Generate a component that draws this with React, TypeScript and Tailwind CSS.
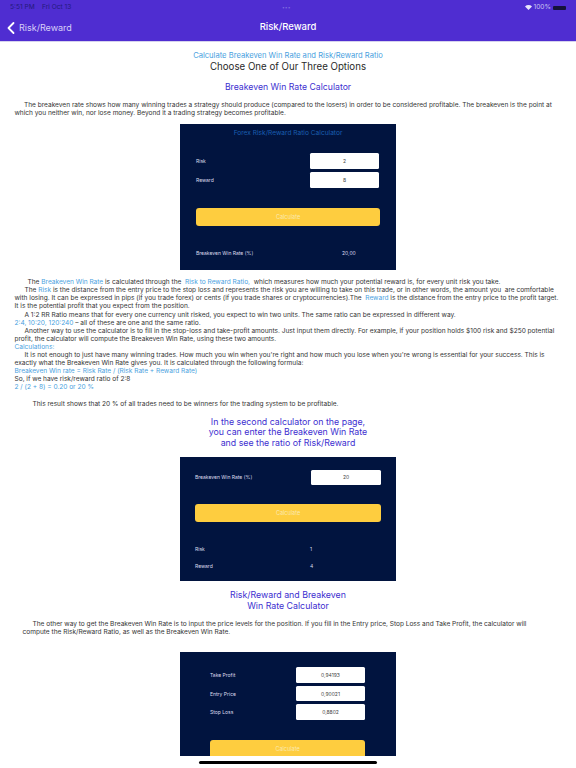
import { ChevronLeft } from 'lucide-react';
import type { ReactNode } from 'react';

function Link({ children }: { children: ReactNode }) {
  return <span className="text-[#4a9fe0]">{children}</span>;
}

function Input({ value, width }: { value: string; width: string }) {
  return (
    <div className={`flex h-[15.5px] items-center justify-center rounded-[1.5px] bg-white text-[5px] text-[#444] ${width}`}>
      {value}
    </div>
  );
}

function Button({ width }: { width: string }) {
  return (
    <div className={`flex h-[18px] shrink-0 items-center justify-center rounded-[3px] bg-[#fecd3f] text-[5.5px] text-[#fbe9b0] ${width}`}>
      Calculate
    </div>
  );
}

export default function App() {
  return (
    <div className="relative h-[768px] w-[576px] overflow-hidden bg-white font-['Inter',sans-serif] text-[#333]">
      <header className="h-[42px] border-b border-[#d5d2ee] bg-[#4f2dd1] text-white">
        <div className="flex h-[14px] items-center justify-between pl-[10px] pr-[10px] pt-[2px] text-[6.6px] text-[#241a7a]">
          <span>5:51 PM&nbsp;&nbsp;&nbsp; Fri Oct 13</span>
          <span className="flex items-center gap-[2px] text-[#c9c2f0]">
            <svg width="7" height="5" viewBox="0 0 14 10" fill="#e8e4fb">
              <path d="M7 10 0 3a10 10 0 0 1 14 0z" />
            </svg>
            100%
            <span className="h-[4.5px] w-[13px] rounded-[1px] bg-[#15123a]" />
          </span>
        </div>
        <div className="relative flex h-[27px] items-center justify-center text-[9.5px] font-medium">
          Risk/Reward
          <div className="absolute left-[1px] top-[3.5px] flex items-center text-[#d8d0f8]">
            <ChevronLeft size={20} strokeWidth={2.2} className="-mr-[2px] text-white" />
            <span className="text-[9px] font-normal">Risk/Reward</span>
          </div>
        </div>
      </header>

      <main className="px-[14.5px] pt-[8.5px] text-[6.56px] leading-[8.1px]">
        <div className="text-center">
          <p className="text-[7.6px] leading-[10px] text-[#4a9fe0]">Calculate Breakeven Win Rate and Risk/Reward Ratio</p>
          <p className="text-[9.7px] leading-[12px] text-[#2a2a2a]">Choose One of Our Three Options</p>
          <h2 className="mt-[8px] text-[8.7px] leading-[12px] text-[#3d2fd0]">Breakeven Win Rate Calculator</h2>
        </div>
        <p className="mt-[8px] whitespace-nowrap indent-[9.5px]">
          The breakeven rate shows how many winning trades a strategy should produce (compared to the losers) in order to be considered profitable. The breakeven is the point at
          <br />
          which you neither win, nor lose money. Beyond it a trading strategy becomes profitable.
        </p>

        <section className="mx-auto mt-[7.5px] h-[146px] w-[216px] bg-[#01143f] px-4 pt-[5px] text-[5px] text-[#dde]">
          <p className="text-center text-[6.6px] text-[#1a5fb0]">Forex Risk/Reward Ratio Calculator</p>
          <div className="mt-[16px] flex flex-col gap-[3.5px]">
            <div className="flex items-center justify-between pr-[1px]">
              <span>Risk</span>
              <Input value="2" width="w-[69px]" />
            </div>
            <div className="flex items-center justify-between pr-[1px]">
              <span>Reward</span>
              <Input value="8" width="w-[69px]" />
            </div>
          </div>
          <div className="mt-[20px]">
            <Button width="w-[184px]" />
          </div>
          <div className="mt-[20px] flex h-[15px] items-center">
            <span className="w-[146px]">Breakeven Win Rate (%)</span>
            <span>20,00</span>
          </div>
        </section>

        <div className="mt-[8px] whitespace-nowrap">
          <p className="indent-[13px]">
            The <Link>Breakeven Win Rate</Link> is calculated through the&nbsp; <Link>Risk to Reward Ratio,</Link>&nbsp; which measures how much your potential reward is, for every unit risk you take.
          </p>
          <p className="indent-[10px]">
            The <Link>Risk</Link> is the distance from the entry price to the stop loss and represents the risk you are willing to take on this trade, or in other words, the amount you&nbsp; are comfortable
            <br />
            with losing. It can be expressed in pips (if you trade forex) or cents (if you trade shares or cryptocurrencies).The&nbsp; <Link>Reward</Link> is the distance from the entry price to the profit target.
            <br />
            It is the potential profit that you expect from the position.
          </p>
          <p className="indent-[10px]">A 1:2 RR Ratio means that for every one currency unit risked, you expect to win two units. The same ratio can be expressed in different way.</p>
          <p>
            <Link>2:4, 10:20, 120:240</Link> – all of these are one and the same ratio.
          </p>
          <p className="indent-[10px]">
            Another way to use the calculator is to fill in the stop-loss and take-profit amounts. Just input them directly. For example, if your position holds $100 risk and $250 potential
            <br />
            profit, the calculator will compute the Breakeven Win Rate, using these two amounts.
          </p>
          <p>
            <Link>Calculations:</Link>
          </p>
          <p className="indent-[10px]">
            It is not enough to just have many winning trades. How much you win when you're right and how much you lose when you're wrong is essential for your success. This is
            <br />
            exactly what the Breakeven Win Rate gives you. It is calculated through the following formula:
          </p>
          <p>
            <Link>Breakeven Win rate = Risk Rate / (Risk Rate + Reward Rate)</Link>
          </p>
          <p>So, if we have risk/reward ratio of 2:8</p>
          <p>
            <Link>2 / (2 + 8) = 0.20 or 20 %</Link>
          </p>
          <p className="mt-[8px] pl-[18px]">This result shows that 20 % of all trades need to be winners for the trading system to be profitable.</p>
        </div>

        <h2 className="mt-[9px] text-center text-[8.8px] leading-[10.7px] text-[#3d2fd0]">
          In the second calculator on the page,
          <br />
          you can enter the Breakeven Win Rate
          <br />
          and see the ratio of Risk/Reward
        </h2>

        <section className="mx-auto mt-[8px] h-[124px] w-[216px] bg-[#01143f] px-[15px] pt-[13px] text-[5px] text-[#dde]">
          <div className="flex items-center justify-between">
            <span>Breakeven Win Rate (%)</span>
            <Input value="20" width="w-[70px]" />
          </div>
          <div className="mt-[19px]">
            <Button width="w-[186px]" />
          </div>
          <div className="mt-[19px] flex flex-col gap-[2px]">
            <div className="flex h-[15.5px] items-center">
              <span className="w-[115px]">Risk</span>1
            </div>
            <div className="flex h-[15.5px] items-center">
              <span className="w-[115px]">Reward</span>4
            </div>
          </div>
        </section>

        <h2 className="mt-[8px] text-center text-[8.8px] leading-[11.7px] text-[#3d2fd0]">
          Risk/Reward and Breakeven
          <br />
          Win Rate Calculator
        </h2>

        <p className="mt-[8px] whitespace-nowrap pl-[8px] indent-[10px]">
          The other way to get the Breakeven Win Rate is to input the price levels for the position. If you fill in the Entry price, Stop Loss and Take Profit, the calculator will
          <br />
          compute the Risk/Reward Ratio, as well as the Breakeven Win Rate.
        </p>

        <section className="mx-auto mt-[15.5px] h-[104.5px] w-[216px] overflow-hidden bg-[#01143f] px-[30px] pt-[15.5px] text-[5px] text-[#dde]">
          <div className="flex flex-col gap-[3px]">
            <div className="flex items-center justify-between pr-[1px]">
              <span>Take Profit</span>
              <Input value="0,94193" width="w-[69px]" />
            </div>
            <div className="flex items-center justify-between pr-[1px]">
              <span>Entry Price</span>
              <Input value="0,90021" width="w-[69px]" />
            </div>
            <div className="flex items-center justify-between pr-[1px]">
              <span>Stop Loss</span>
              <Input value="0,8802" width="w-[69px]" />
            </div>
          </div>
          <div className="mt-[20.5px]">
            <Button width="w-[155px]" />
          </div>
        </section>
      </main>

      <div className="absolute left-[199px] top-[761px] h-[3px] w-[178px] rounded-full bg-black" />
      <div className="absolute left-[282px] top-[6px] text-[5px] leading-[3px] text-[#7f6ae0]">•••</div>
    </div>
  );
}
